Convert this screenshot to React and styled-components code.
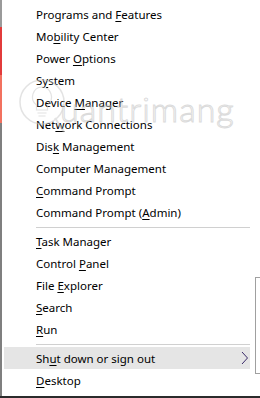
import React from "react";
import styled, { createGlobalStyle } from "styled-components";

const Global = createGlobalStyle`
  html, body {
    margin: 0;
    padding: 0;
    background: #ffffff;
  }
  body {
    width: 260px;
    height: 398px;
    overflow: hidden;
  }
`;

const Screen = styled.div`
  position: relative;
  width: 260px;
  height: 398px;
  display: flex;
  flex-direction: column;
  background: #ffffff;
  overflow: hidden;
`;

const Body = styled.div`
  flex: 1;
  display: flex;
`;

const Strip = styled.div`
  width: 2px;
  display: flex;
  flex-direction: column;
`;

const StripPart = styled.div`
  height: ${(p) => (p.h ? p.h + "px" : "auto")};
  flex: ${(p) => (p.h ? "none" : "1")};
  background: ${(p) => p.color};
`;

const Menu = styled.div`
  margin-left: 2px;
  width: 246px;
  padding-top: 3px;
  display: flex;
  flex-direction: column;
  font-family: "Noto Sans", "Liberation Sans", sans-serif;
  font-size: 11.5px;
  color: #000;
`;

const Row = styled.div`
  height: 22px;
  display: flex;
  align-items: center;
  padding-left: 32px;
  padding-right: 1px;
  background: ${(p) => (p.active ? "#e5e5e5" : "transparent")};
  white-space: nowrap;
  u {
    text-decoration: underline;
    text-underline-offset: 2px;
  }
`;

const Label = styled.span`
  flex: 1;
`;

const Separator = styled.div`
  margin: 4px 0 2px 32px;
  height: 1px;
  background: #d0d0d0;
`;

const Footer = styled.div`
  height: 2px;
  background: #2b2b2b;
`;

const Submenu = styled.div`
  position: absolute;
  left: 255px;
  top: 277px;
  width: 20px;
  height: 95px;
  border: 1px solid #a0a0a0;
`;

const Watermark = styled.div`
  position: absolute;
  left: 18px;
  top: 74px;
  display: flex;
  align-items: center;
  pointer-events: none;
  opacity: 0.5;
`;

const MarkText = styled.span`
  font-family: "Lato", "Noto Sans", sans-serif;
  font-size: 34px;
  font-weight: 300;
  letter-spacing: 1px;
  color: rgba(255, 255, 255, 0.4);
  -webkit-text-stroke: 1px #b8b8b8;
  margin-left: -6px;
  margin-top: 6px;
`;

const groups = [
  [
    ["Programs and ", "F", "eatures"],
    ["Mo", "b", "ility Center"],
    ["Power ", "O", "ptions"],
    ["S", "y", "stem"],
    ["Device ", "M", "anager"],
    ["Net", "w", "ork Connections"],
    ["Dis", "k", " Management"],
    ["Computer Mana", "g", "ement"],
    ["", "C", "ommand Prompt"],
    ["Command Prompt (", "A", "dmin)"],
  ],
  [
    ["", "T", "ask Manager"],
    ["Control ", "P", "anel"],
    ["File ", "E", "xplorer"],
    ["", "S", "earch"],
    ["", "R", "un"],
  ],
];

function Chevron() {
  return (
    <svg width="8" height="14" viewBox="0 0 8 14">
      <polyline
        points="1,1 6.5,7 1,13"
        fill="none"
        stroke="#3a2a6a"
        strokeWidth="1"
      />
    </svg>
  );
}

function Item({ parts, active, sub }) {
  return (
    <Row active={active}>
      <Label>
        {parts[0]}
        <u>{parts[1]}</u>
        {parts[2]}
      </Label>
      {sub && <Chevron />}
    </Row>
  );
}

function App() {
  return (
    <Screen>
      <Global />
      <Body>
        <Strip>
          <StripPart h={27} color="#9a9a9a" />
          <StripPart h={48} color="#e23b3b" />
          <StripPart h={48} color="#f2715f" />
          <StripPart color="#7f7f7f" />
        </Strip>
        <Menu>
          {groups[0].map((p) => (
            <Item key={p.join("")} parts={p} />
          ))}
          <Separator />
          {groups[1].map((p) => (
            <Item key={p.join("")} parts={p} />
          ))}
          <Separator />
          <Item parts={["Sh", "u", "t down or sign out"]} active sub />
          <Item parts={["", "D", "esktop"]} />
        </Menu>
      </Body>
      <Footer />
      <Submenu />
      <Watermark>
        <svg width="48" height="62" viewBox="0 0 48 62">
          <circle cx="24" cy="28" r="22" fill="none" stroke="#c8c8c8" strokeWidth="1.5" />
          <path
            d="M24 13 a10 10 0 0 1 5.5 18 v5 h-11 v-5 a10 10 0 0 1 5.5 -18 z"
            fill="none"
            stroke="#c8c8c8"
            strokeWidth="1.2"
          />
          <path d="M19.5 39 h9 M20.5 42 h7" stroke="#c8c8c8" strokeWidth="1.2" />
          <path d="M37 44 l9 14" stroke="#c8c8c8" strokeWidth="2" />
        </svg>
        <MarkText>uantrimang</MarkText>
      </Watermark>
    </Screen>
  );
}

export default App;
